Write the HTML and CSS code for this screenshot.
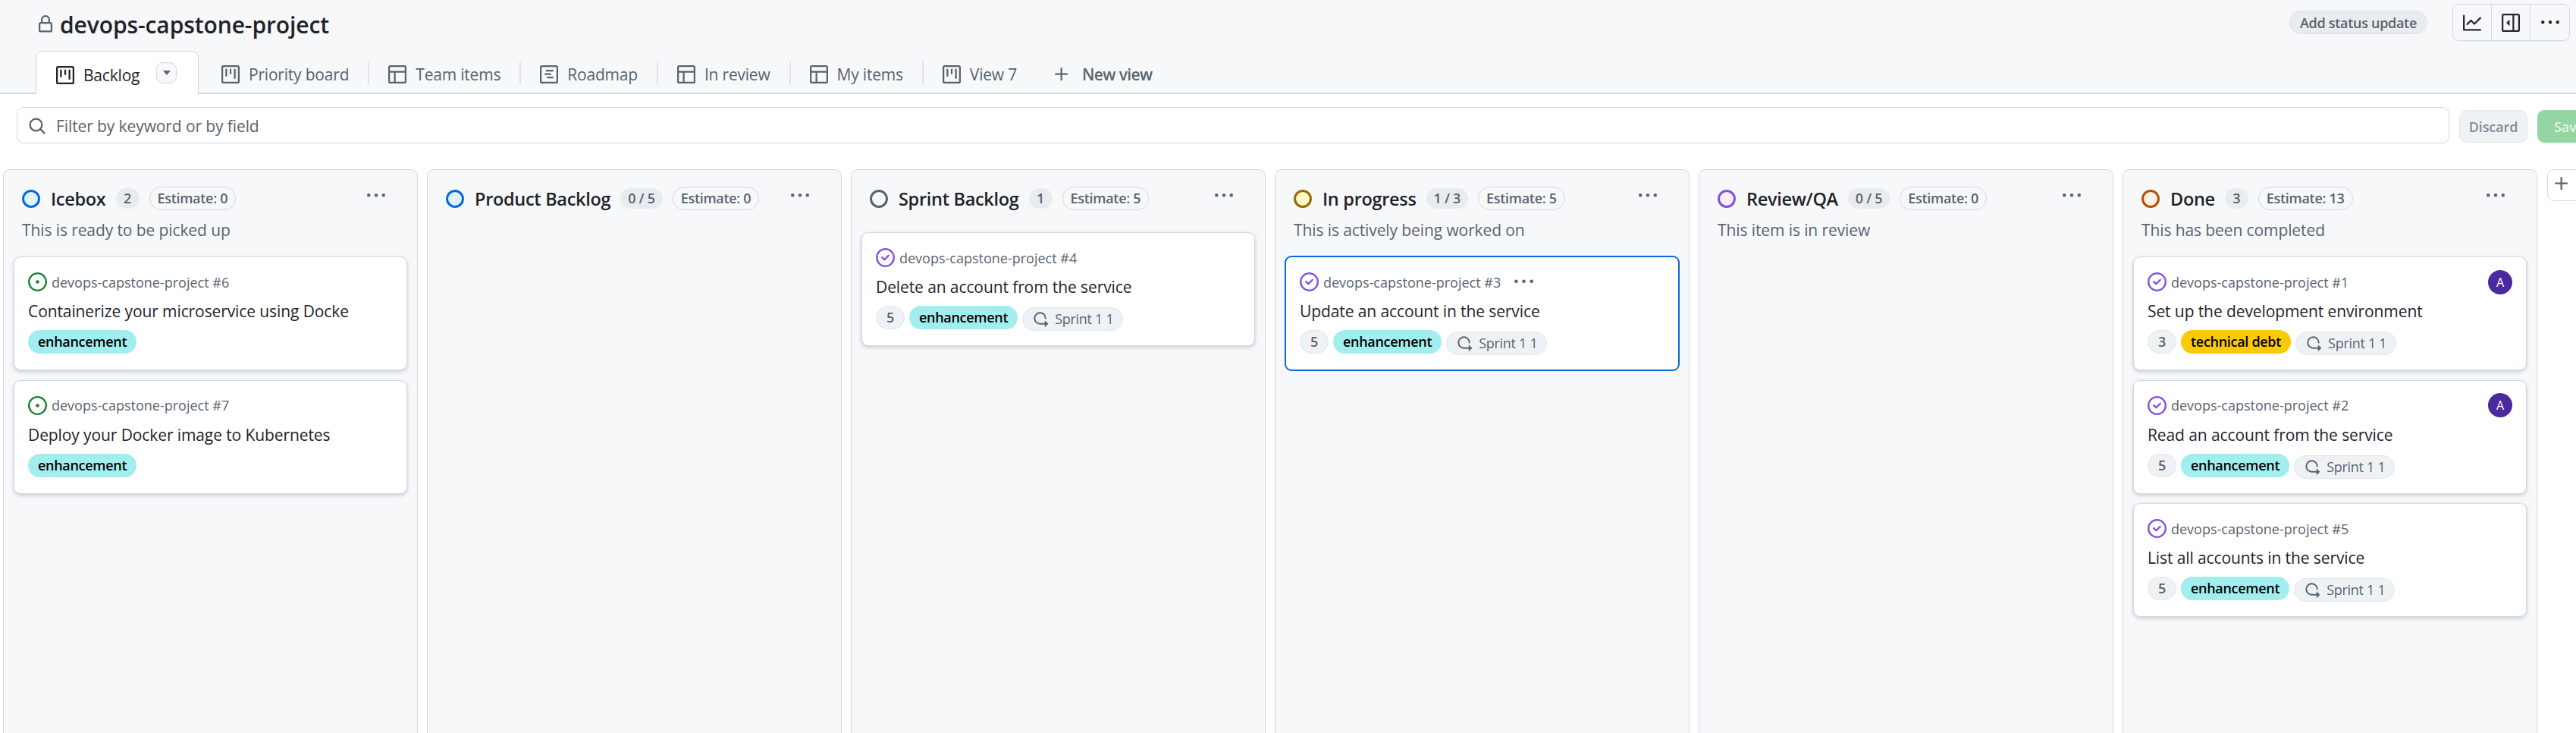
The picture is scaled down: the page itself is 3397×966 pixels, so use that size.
FILE: index.html
```html
<!DOCTYPE html>
<html>
<head>
  <title>devops-capstone-project</title>
  <link rel="stylesheet" href="styles.css">
</head>
<body>
  <svg class="sprite" xmlns="http://www.w3.org/2000/svg">
    <symbol id="i-board" viewBox="0 0 16 16"><path d="M1.75 0h12.5C15.216 0 16 .784 16 1.75v12.5A1.75 1.75 0 0 1 14.25 16H1.75A1.75 1.75 0 0 1 0 14.25V1.75C0 .784.784 0 1.75 0ZM1.5 1.75v12.5c0 .138.112.25.25.25h12.5a.25.25 0 0 0 .25-.25V1.75a.25.25 0 0 0-.25-.25H1.75a.25.25 0 0 0-.25.25ZM11.75 3a.75.75 0 0 1 .75.75v7.5a.75.75 0 0 1-1.5 0v-7.5a.75.75 0 0 1 .75-.75Zm-8.25.75a.75.75 0 0 1 1.5 0v5.5a.75.75 0 0 1-1.5 0ZM8 3a.75.75 0 0 1 .75.75v3.5a.75.75 0 0 1-1.5 0v-3.5A.75.75 0 0 1 8 3Z"/></symbol>
    <symbol id="i-table" viewBox="0 0 16 16"><path d="M0 1.75C0 .784.784 0 1.75 0h12.5C15.216 0 16 .784 16 1.75v12.5A1.75 1.75 0 0 1 14.25 16H1.75A1.75 1.75 0 0 1 0 14.25ZM6.5 6.5v8h7.75a.25.25 0 0 0 .25-.25V6.5Zm8-1.5V1.75a.25.25 0 0 0-.25-.25H1.75a.25.25 0 0 0-.25.25V5Zm-13 1.5v7.75c0 .138.112.25.25.25H5v-8Z"/></symbol>
    <symbol id="i-roadmap" viewBox="0 0 16 16"><path d="M4.75 7a.75.75 0 0 0 0 1.5h4.5a.75.75 0 0 0 0-1.5h-4.5ZM5 4.75A.75.75 0 0 1 5.75 4h5.5a.75.75 0 0 1 0 1.5h-5.5A.75.75 0 0 1 5 4.75ZM6.75 10a.75.75 0 0 0 0 1.5h4.5a.75.75 0 0 0 0-1.5h-4.5Z"/><path d="M0 1.75C0 .784.784 0 1.75 0h12.5C15.216 0 16 .784 16 1.75v12.5A1.75 1.75 0 0 1 14.25 16H1.75A1.75 1.75 0 0 1 0 14.25Zm1.75-.25a.25.25 0 0 0-.25.25v12.5c0 .138.112.25.25.25h12.5a.25.25 0 0 0 .25-.25V1.75a.25.25 0 0 0-.25-.25Z"/></symbol>
    <symbol id="i-graph" viewBox="0 0 16 16"><path d="M1.5 1.75V13.5h13.75a.75.75 0 0 1 0 1.5H.75a.75.75 0 0 1-.75-.75V1.75a.75.75 0 0 1 1.5 0Zm14.28 2.53-5.25 5.25a.75.75 0 0 1-1.06 0L7 7.06 4.28 9.78a.751.751 0 0 1-1.042-.018.751.751 0 0 1-.018-1.042l3.25-3.25a.75.75 0 0 1 1.06 0L10 7.94l4.72-4.72a.751.751 0 0 1 1.042.018.751.751 0 0 1 .018 1.042Z"/></symbol>
    <symbol id="i-sidebar" viewBox="0 0 16 16"><path d="m4.177 7.823 2.396-2.396A.25.25 0 0 1 7 5.604v4.792a.25.25 0 0 1-.427.177L4.177 8.177a.25.25 0 0 1 0-.354Z"/><path d="M0 1.75C0 .784.784 0 1.75 0h12.5C15.216 0 16 .784 16 1.75v12.5A1.75 1.75 0 0 1 14.25 16H1.75A1.75 1.75 0 0 1 0 14.25Zm1.75-.25a.25.25 0 0 0-.25.25v12.5c0 .138.112.25.25.25H9.5v-13Zm12.5 13a.25.25 0 0 0 .25-.25V1.75a.25.25 0 0 0-.25-.25H11v13Z"/></symbol>
    <symbol id="i-dots" viewBox="0 0 16 16"><path d="M8 9a1.5 1.5 0 1 0 0-3 1.5 1.5 0 0 0 0 3ZM1.5 9a1.5 1.5 0 1 0 0-3 1.5 1.5 0 0 0 0 3Zm13 0a1.5 1.5 0 1 0 0-3 1.5 1.5 0 0 0 0 3Z"/></symbol>
    <symbol id="i-search" viewBox="0 0 16 16"><path d="M10.68 11.74a6 6 0 0 1-7.922-8.982 6 6 0 0 1 8.982 7.922l3.04 3.04a.749.749 0 0 1-.326 1.275.749.749 0 0 1-.734-.215ZM11.5 7a4.499 4.499 0 1 0-8.997 0A4.499 4.499 0 0 0 11.5 7Z"/></symbol>
    <symbol id="i-lock" viewBox="0 0 16 16"><path d="M4 4a4 4 0 0 1 8 0v2h.25c.966 0 1.75.784 1.75 1.75v5.5A1.75 1.75 0 0 1 12.25 15h-8.5A1.75 1.75 0 0 1 2 13.25v-5.5C2 6.784 2.784 6 3.75 6H4Zm8.25 3.5h-8.5a.25.25 0 0 0-.25.25v5.5c0 .138.112.25.25.25h8.5a.25.25 0 0 0 .25-.25v-5.5a.25.25 0 0 0-.25-.25ZM10.5 6V4a2.5 2.5 0 1 0-5 0v2Z"/></symbol>
    <symbol id="i-plus" viewBox="0 0 16 16"><path d="M7.75 2a.75.75 0 0 1 .75.75V7h4.25a.75.75 0 0 1 0 1.5H8.5v4.25a.75.75 0 0 1-1.5 0V8.5H2.75a.75.75 0 0 1 0-1.5H7V2.75A.75.75 0 0 1 7.75 2Z"/></symbol>
    <symbol id="i-open" viewBox="0 0 16 16"><path d="M8 9.5a1.5 1.5 0 1 0 0-3 1.5 1.5 0 0 0 0 3Z"/><path d="M8 0a8 8 0 1 1 0 16A8 8 0 0 1 8 0ZM1.5 8a6.5 6.5 0 1 0 13 0 6.5 6.5 0 0 0-13 0Z"/></symbol>
    <symbol id="i-closed" viewBox="0 0 16 16"><path d="M11.28 6.78a.75.75 0 0 0-1.06-1.06L7.25 8.69 5.78 7.22a.75.75 0 0 0-1.06 1.06l2 2a.75.75 0 0 0 1.06 0l3.5-3.5Z"/><path d="M16 8A8 8 0 1 1 0 8a8 8 0 0 1 16 0Zm-1.5 0a6.5 6.5 0 1 0-13 0 6.5 6.5 0 0 0 13 0Z"/></symbol>
    <symbol id="i-iter" viewBox="0 0 16 16"><path d="M2.5 7.25a4.75 4.75 0 0 1 9.5 0 .75.75 0 0 0 1.5 0 6.25 6.25 0 1 0-6.25 6.25H12v2.146c0 .223.27.335.427.177l2.896-2.896a.25.25 0 0 0 0-.354l-2.896-2.896a.25.25 0 0 0-.427.177V12H7.25A4.75 4.75 0 0 1 2.5 7.25Z"/></symbol>
  </svg>

  <header class="page-head">
    <div class="title-row">
      <svg class="icon lock"><use href="#i-lock"/></svg>
      <h1 class="title">devops-capstone-project</h1>
      <button class="status-btn">Add status update</button>
      <div class="btn-group">
        <button><svg class="icon"><use href="#i-graph"/></svg></button>
        <button><svg class="icon"><use href="#i-sidebar"/></svg></button>
        <button><svg class="icon"><use href="#i-dots"/></svg></button>
      </div>
    </div>
    <nav class="tabs">
      <a class="tab active"><svg class="icon"><use href="#i-board"/></svg>Backlog<span class="tab-menu"><i class="caret"></i></span></a>
      <a class="tab"><svg class="icon"><use href="#i-board"/></svg>Priority board</a>
      <span class="tab-sep"></span>
      <a class="tab"><svg class="icon"><use href="#i-table"/></svg>Team items</a>
      <span class="tab-sep"></span>
      <a class="tab"><svg class="icon"><use href="#i-roadmap"/></svg>Roadmap</a>
      <span class="tab-sep"></span>
      <a class="tab"><svg class="icon"><use href="#i-table"/></svg>In review</a>
      <span class="tab-sep"></span>
      <a class="tab"><svg class="icon"><use href="#i-table"/></svg>My items</a>
      <span class="tab-sep"></span>
      <a class="tab"><svg class="icon"><use href="#i-board"/></svg>View 7</a>
      <a class="tab new-view"><svg class="icon"><use href="#i-plus"/></svg>New view</a>
    </nav>
  </header>

  <div class="toolbar">
    <div class="filter">
      <svg class="icon"><use href="#i-search"/></svg>
      <span>Filter by keyword or by field</span>
    </div>
    <button class="discard">Discard</button>
    <button class="save">Save</button>
  </div>

  <main class="board">
    <section class="col">
      <div class="col-head">
        <div class="col-title-row">
          <span class="status blue"></span>
          <h2>Icebox</h2>
          <span class="count">2</span>
          <span class="estimate">Estimate: 0</span>
          <svg class="icon col-menu"><use href="#i-dots"/></svg>
        </div>
        <p class="col-desc">This is ready to be picked up</p>
      </div>
      <div class="cards">
        <article class="card">
          <div class="meta"><svg class="icon open"><use href="#i-open"/></svg>devops-capstone-project #6</div>
          <div class="card-title">Containerize your microservice using Docke</div>
          <div class="chips"><span class="label enh">enhancement</span></div>
        </article>
        <article class="card">
          <div class="meta"><svg class="icon open"><use href="#i-open"/></svg>devops-capstone-project #7</div>
          <div class="card-title">Deploy your Docker image to Kubernetes</div>
          <div class="chips"><span class="label enh">enhancement</span></div>
        </article>
      </div>
    </section>

    <section class="col">
      <div class="col-head">
        <div class="col-title-row">
          <span class="status blue"></span>
          <h2>Product Backlog</h2>
          <span class="count">0 / 5</span>
          <span class="estimate">Estimate: 0</span>
          <svg class="icon col-menu"><use href="#i-dots"/></svg>
        </div>
      </div>
    </section>

    <section class="col">
      <div class="col-head">
        <div class="col-title-row">
          <span class="status gray"></span>
          <h2>Sprint Backlog</h2>
          <span class="count">1</span>
          <span class="estimate">Estimate: 5</span>
          <svg class="icon col-menu"><use href="#i-dots"/></svg>
        </div>
      </div>
      <div class="cards">
        <article class="card">
          <div class="meta"><svg class="icon closed"><use href="#i-closed"/></svg>devops-capstone-project #4</div>
          <div class="card-title">Delete an account from the service</div>
          <div class="chips">
            <span class="points">5</span>
            <span class="label enh">enhancement</span>
            <span class="sprint"><svg class="icon"><use href="#i-iter"/></svg>Sprint 1 1</span>
          </div>
        </article>
      </div>
    </section>

    <section class="col">
      <div class="col-head">
        <div class="col-title-row">
          <span class="status yellow"></span>
          <h2>In progress</h2>
          <span class="count">1 / 3</span>
          <span class="estimate">Estimate: 5</span>
          <svg class="icon col-menu"><use href="#i-dots"/></svg>
        </div>
        <p class="col-desc">This is actively being worked on</p>
      </div>
      <div class="cards">
        <article class="card selected">
          <div class="meta"><svg class="icon closed"><use href="#i-closed"/></svg>devops-capstone-project #3<svg class="icon card-menu"><use href="#i-dots"/></svg></div>
          <div class="card-title">Update an account in the service</div>
          <div class="chips">
            <span class="points">5</span>
            <span class="label enh">enhancement</span>
            <span class="sprint"><svg class="icon"><use href="#i-iter"/></svg>Sprint 1 1</span>
          </div>
        </article>
      </div>
    </section>

    <section class="col">
      <div class="col-head">
        <div class="col-title-row">
          <span class="status purple"></span>
          <h2>Review/QA</h2>
          <span class="count">0 / 5</span>
          <span class="estimate">Estimate: 0</span>
          <svg class="icon col-menu"><use href="#i-dots"/></svg>
        </div>
        <p class="col-desc">This item is in review</p>
      </div>
    </section>

    <section class="col">
      <div class="col-head">
        <div class="col-title-row">
          <span class="status orange"></span>
          <h2>Done</h2>
          <span class="count">3</span>
          <span class="estimate">Estimate: 13</span>
          <svg class="icon col-menu"><use href="#i-dots"/></svg>
        </div>
        <p class="col-desc">This has been completed</p>
      </div>
      <div class="cards">
        <article class="card">
          <div class="meta"><svg class="icon closed"><use href="#i-closed"/></svg>devops-capstone-project #1<span class="avatar">A</span></div>
          <div class="card-title">Set up the development environment</div>
          <div class="chips">
            <span class="points">3</span>
            <span class="label debt">technical debt</span>
            <span class="sprint"><svg class="icon"><use href="#i-iter"/></svg>Sprint 1 1</span>
          </div>
        </article>
        <article class="card">
          <div class="meta"><svg class="icon closed"><use href="#i-closed"/></svg>devops-capstone-project #2<span class="avatar">A</span></div>
          <div class="card-title">Read an account from the service</div>
          <div class="chips">
            <span class="points">5</span>
            <span class="label enh">enhancement</span>
            <span class="sprint"><svg class="icon"><use href="#i-iter"/></svg>Sprint 1 1</span>
          </div>
        </article>
        <article class="card">
          <div class="meta"><svg class="icon closed"><use href="#i-closed"/></svg>devops-capstone-project #5</div>
          <div class="card-title">List all accounts in the service</div>
          <div class="chips">
            <span class="points">5</span>
            <span class="label enh">enhancement</span>
            <span class="sprint"><svg class="icon"><use href="#i-iter"/></svg>Sprint 1 1</span>
          </div>
        </article>
      </div>
    </section>

    <button class="add-col"><svg class="icon"><use href="#i-plus"/></svg></button>
  </main>
</body>
</html>
```

FILE: styles.css
```css
* { box-sizing: border-box; }
html, body { height: 100%; }
body {
  margin: 0;
  width: 3397px;
  height: 966px;
  overflow: hidden;
  background: #fff;
  color: #1f2328;
  font-family: "Open Sans", "Noto Sans", sans-serif;
  font-size: 21px;
  letter-spacing: -0.1px;
}
button { font-family: inherit; letter-spacing: inherit; cursor: pointer; }
.sprite { display: none; }
.icon { width: 24px; height: 24px; fill: currentColor; flex: none; }

/* header */
.page-head {
  height: 124px;
  background: #f6f8fa;
  border-bottom: 2px solid #d1d9e0;
  padding-top: 5px;
}
.title-row {
  display: flex;
  align-items: center;
  height: 49px;
  padding: 0 8px 0 48px;
}
.lock { color: #59636e; margin-top: 4px; }
.title {
  flex: 1;
  margin: 5px 0 0 7px;
  font-size: 30px;
  font-weight: 600;
  letter-spacing: -0.1px;
}
.status-btn {
  height: 31px;
  width: 182px;
  padding: 0;
  margin-right: 33px;
  border: 1px solid #dde1e6;
  border-radius: 16px;
  background: #e9ecef;
  color: #59636e;
  font-size: 18px;
  font-weight: 600;
  letter-spacing: -0.3px;
}
.btn-group {
  display: flex;
  height: 49px;
  border: 1px solid #d1d9e0;
  border-radius: 9px;
  box-shadow: 0 1px 1px rgba(31, 35, 40, 0.04);
}
.btn-group button {
  width: 51px;
  border: 0;
  border-right: 1px solid #d1d9e0;
  background: none;
  color: #25292e;
  padding: 0;
  display: flex;
  align-items: center;
  justify-content: center;
}
.btn-group button:last-child { border-right: 0; }

.tabs {
  display: flex;
  align-items: center;
  height: 57px;
  margin-top: 13px;
  padding-left: 47px;
  letter-spacing: -0.2px;
}
.tab {
  display: flex;
  align-items: center;
  gap: 12px;
  padding: 5px 25px 0;
  height: 100%;
  color: #59636e;
  white-space: nowrap;
}
.tab .icon { color: #59636e; }
.tab.active {
  width: 215px;
  margin-right: 5px;
  background: #fff;
  border: 1px solid #d1d9e0;
  border-bottom: 0;
  border-radius: 9px 9px 0 0;
  color: #1f2328;
  padding: 5px 0 0 26px;
}
.tab.active .icon { color: #1f2328; }
.tab-menu {
  display: flex;
  align-items: center;
  justify-content: center;
  width: 27px;
  height: 28px;
  margin: -6px 0 0 10px;
  background: #f6f8fa;
  border: 1px solid #d1d9e0;
  border-radius: 9px;
}
.caret {
  border-left: 5px solid transparent;
  border-right: 5px solid transparent;
  border-top: 6px solid #59636e;
}
.tab-sep { width: 2px; height: 30px; background: #dde3e9; margin-top: 1px; }
.new-view { font-weight: 600; gap: 15px; letter-spacing: -0.6px; margin-left: -3px; }

/* filter bar */
.toolbar {
  display: flex;
  align-items: flex-start;
  width: 3430px;
  padding: 17px 0 34px 22px;
}
.filter {
  flex: 1;
  display: flex;
  align-items: center;
  gap: 13px;
  height: 48px;
  padding: 1px 0 0 14px;
  border: 1px solid #d1d9e0;
  border-radius: 9px;
  color: #59636e;
}
.discard, .save {
  height: 43px;
  margin-top: 4px;
  border-radius: 9px;
  font-size: 18px;
  font-weight: 600;
  padding: 0;
}
.discard {
  width: 90px;
  margin-left: 13px;
  background: #eff2f5;
  border: 1px solid #e5e9ed;
  color: #818b98;
}
.save {
  width: 84px;
  margin-left: 13px;
  background: #95d5a3;
  border: 0;
  color: #e4f5e8;
}

/* board */
.board {
  display: flex;
  align-items: flex-start;
  gap: 12px;
  padding-left: 4px;
}
.col {
  flex: none;
  width: 547px;
  height: 760px;
  background: #f6f8fa;
  border: 1px solid #d1d9e0;
  border-radius: 9px 9px 0 0;
  padding: 0 13px;
}
.col-head { padding: 22px 11px 29px; }
.col-title-row { display: flex; align-items: center; height: 31px; }
.col-title-row h2 {
  margin: 0 13px 0 14px;
  font-size: 23.5px;
  font-weight: 600;
  letter-spacing: -0.3px;
  color: #1f2328;
}
.status {
  flex: none;
  width: 24px;
  height: 24px;
  border-radius: 50%;
  border: 3px solid;
}
.status.blue { border-color: #0969da; background: #ddf4ff; }
.status.gray { border-color: #59636e; background: #f6f8fa; }
.status.yellow { border-color: #9a6700; background: #fff8c5; }
.status.purple { border-color: #8250df; background: #fbefff; }
.status.orange { border-color: #bc4c00; background: #fff1e5; }
.count {
  min-width: 31px;
  height: 27px;
  line-height: 27px;
  padding: 0 10px;
  border-radius: 14px;
  background: #e9ecef;
  color: #59636e;
  font-size: 18px;
  font-weight: 600;
  letter-spacing: -0.3px;
  text-align: center;
}
.estimate {
  height: 31px;
  line-height: 29px;
  margin-left: 13px;
  padding: 0 10px;
  border: 1px solid #d1d9e0;
  border-radius: 16px;
  color: #59636e;
  font-size: 18px;
  font-weight: 600;
  letter-spacing: -0.3px;
}
.col-menu { margin-left: auto; margin-top: -8px; margin-right: 18px; color: #59636e; }
.col-desc {
  margin: 11px 0 -10px;
  line-height: 31px;
  color: #59636e;
}

.cards { display: flex; flex-direction: column; gap: 12.5px; }
.card {
  height: 150px;
  padding: 20px 18px 0;
  background: #fff;
  border: 1px solid #d1d9e0;
  border-radius: 9px;
  box-shadow: 0 2px 5px rgba(31, 35, 40, 0.2);
}
.card.selected {
  margin: -1px;
  height: 152px;
  border: 2px solid #0969da;
  box-shadow: none;
}
.meta {
  display: flex;
  align-items: center;
  gap: 6px;
  height: 25px;
  color: #59636e;
  font-size: 18px;
  letter-spacing: 0;
}
.meta .icon { width: 25px; height: 25px; }
.open { color: #1a7f37; }
.closed { color: #8250df; }
.meta .card-menu { color: #59636e; margin-left: 12px; }
.avatar {
  width: 32px;
  height: 32px;
  margin: -4px 0 -4px auto;
  border-radius: 50%;
  background: #4c2a9e;
  color: #fff;
  font-size: 16px;
  line-height: 32px;
  text-align: center;
}
.card-title {
  margin-top: 11px;
  height: 30px;
  line-height: 30px;
  color: #1f2328;
}
.chips { display: flex; align-items: flex-start; gap: 6px; margin-top: 10px; }
.points, .label, .sprint {
  height: 31px;
  line-height: 31px;
  border-radius: 16px;
  font-size: 18px;
  font-weight: 600;
  letter-spacing: -0.3px;
}
.points {
  width: 38px;
  text-align: center;
  background: #eff2f5;
  border: 1px solid #e1e5ea;
  line-height: 29px;
  color: #59636e;
}
.label { padding: 0 13px; color: #000; }
.label.enh { background: #a2eeef; }
.label.debt { background: #fbca04; }
.sprint {
  display: flex;
  align-items: center;
  gap: 8px;
  margin-top: 2px;
  padding: 0 12px 0 13px;
  background: #eff2f5;
  border: 1px solid #e1e5ea;
  color: #59636e;
  font-weight: 500;
}
.sprint .icon { width: 21px; height: 21px; }

.add-col {
  flex: none;
  width: 60px;
  height: 42px;
  margin-left: 1px;
  padding: 0 0 0 6px;
  text-align: left;
  background: #fff;
  border: 1px solid #d1d9e0;
  border-radius: 9px;
  color: #59636e;
}
```
